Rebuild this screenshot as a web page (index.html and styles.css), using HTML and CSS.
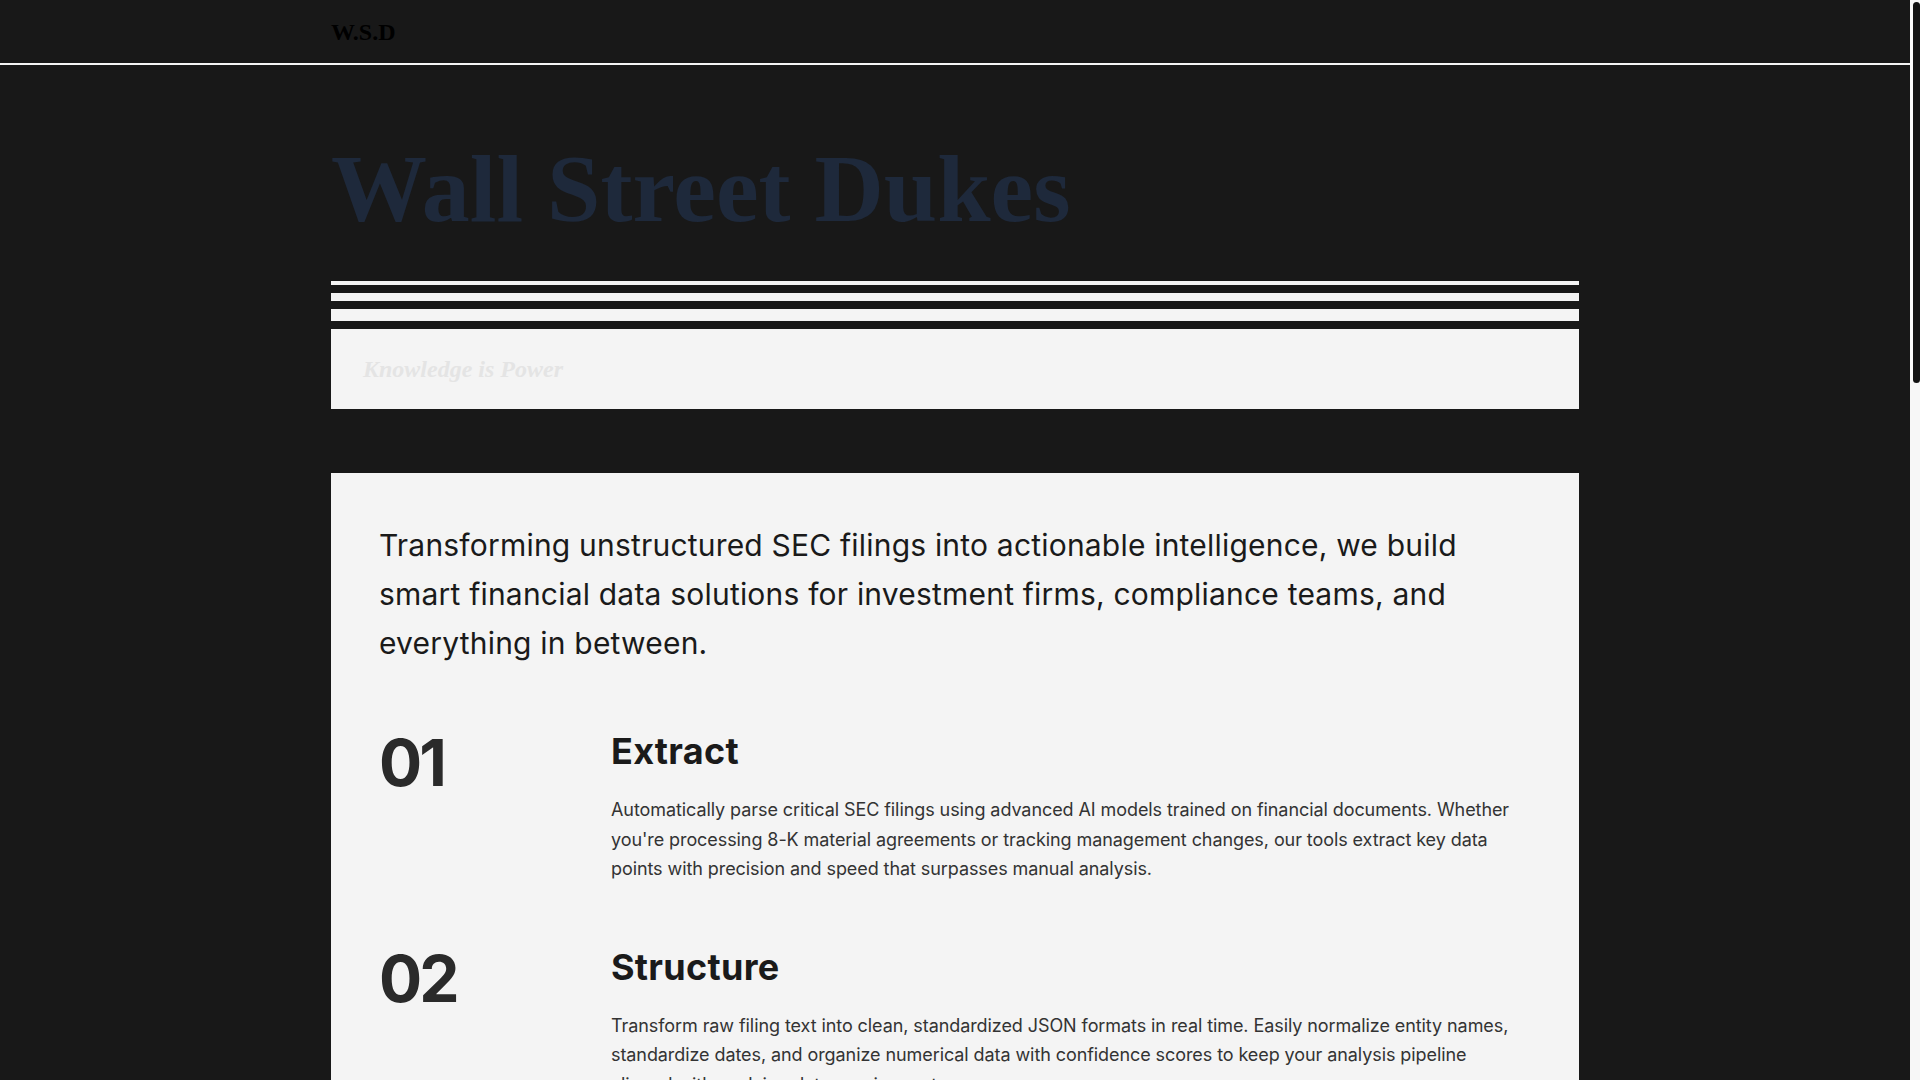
FILE: index.html
```html
<!DOCTYPE html>
<html lang="en">
<head>
<meta charset="utf-8">
<title>Wall Street Dukes</title>
<link rel="stylesheet" href="styles.css">
</head>
<body>
<div class="page">
  <header class="site-header">
    <div class="container header-inner">
      <span class="logo">W.S.D</span>
    </div>
  </header>

  <main>
    <section class="hero container">
      <h1 class="hero-title">Wall Street Dukes</h1>
      <div class="stripes">
        <div class="stripe stripe-sm"></div>
        <div class="stripe stripe-md"></div>
        <div class="stripe stripe-lg"></div>
      </div>
      <div class="tagline-box">
        <p class="tagline">Knowledge is Power</p>
      </div>
    </section>

    <section class="container">
      <div class="card">
        <p class="intro">Transforming unstructured SEC filings into actionable intelligence, we build smart financial data solutions for investment firms, compliance teams, and everything in between.</p>

        <div class="features">
          <div class="feature">
            <div class="feature-num">01</div>
            <div class="feature-body">
              <h2 class="feature-title">Extract</h2>
              <p class="feature-text">Automatically parse critical SEC filings using advanced AI models trained on financial documents. Whether you're processing 8-K material agreements or tracking management changes, our tools extract key data points with precision and speed that surpasses manual analysis.</p>
            </div>
          </div>
          <div class="feature">
            <div class="feature-num">02</div>
            <div class="feature-body">
              <h2 class="feature-title">Structure</h2>
              <p class="feature-text">Transform raw filing text into clean, standardized JSON formats in real time. Easily normalize entity names, standardize dates, and organize numerical data with confidence scores to keep your analysis pipeline aligned with evolving data requirements.</p>
            </div>
          </div>
          <div class="feature">
            <div class="feature-num">03</div>
            <div class="feature-body">
              <h2 class="feature-title">Analyze</h2>
              <p class="feature-text">Surface the signals that matter across thousands of filings. Compare disclosures over time, flag unusual language, and connect related events so your team can focus on decisions instead of document review.</p>
            </div>
          </div>
          <div class="feature">
            <div class="feature-num">04</div>
            <div class="feature-body">
              <h2 class="feature-title">Deliver</h2>
              <p class="feature-text">Push structured results straight into your existing tools through simple APIs and scheduled exports. From research dashboards to compliance workflows, your data arrives where you need it, when you need it.</p>
            </div>
          </div>
        </div>
      </div>
    </section>

    <section class="container audience">
      <h2 class="section-title">Who We Serve</h2>
      <div class="audience-grid">
        <div class="audience-card">
          <h3 class="audience-title">Investment Firms</h3>
          <p class="audience-text">Track material events, insider activity and management changes across your coverage universe without reading every filing.</p>
        </div>
        <div class="audience-card">
          <h3 class="audience-title">Compliance Teams</h3>
          <p class="audience-text">Monitor disclosures, catch missing information and keep a clean audit trail of every document you review.</p>
        </div>
        <div class="audience-card">
          <h3 class="audience-title">Research Analysts</h3>
          <p class="audience-text">Build datasets from years of filings in minutes and spend your time on insight rather than data entry.</p>
        </div>
      </div>
    </section>

    <section class="container contact">
      <div class="contact-box">
        <h2 class="contact-title">Ready to put your filings to work?</h2>
        <p class="contact-text">Talk to our team about a pilot tailored to your workflow.</p>
        <span class="contact-button">Get in touch</span>
      </div>
    </section>
  </main>

  <footer class="site-footer">
    <div class="container footer-inner">
      <span class="footer-logo">W.S.D</span>
      <span class="footer-copy">© 2025 Wall Street Dukes. All rights reserved.</span>
    </div>
  </footer>
</div>
<div class="scrollbar" aria-hidden="true"><div class="scrollbar-thumb"></div></div>
</body>
</html>
```

FILE: styles.css
```css
html, body {
  margin: 0;
  padding: 0;
}

body {
  display: flex;
  align-items: flex-start;
  background: #181818;
  font-family: "Inter", "Liberation Sans", sans-serif;
  color: #f4f4f4;
}

.page {
  flex: 1;
  min-width: 0;
}

.scrollbar {
  flex: 0 0 10px;
  position: sticky;
  top: 0;
  height: 100vh;
  background: #f7f7f7;
}

.scrollbar-thumb {
  margin: 2px 0 0 3px;
  height: 381px;
  background: #111111;
  border-radius: 4px;
}

.container {
  max-width: 1248px;
  margin: 0 auto;
  padding: 0 16px;
}

.site-header {
  height: 63px;
  border-bottom: 2px solid #f4f4f4;
}

.header-inner {
  height: 100%;
  display: flex;
  align-items: center;
}

.logo {
  font-family: "Liberation Serif", "Times New Roman", serif;
  font-weight: 700;
  font-size: 24px;
  line-height: 1;
  color: #000;
}

.hero {
  padding-top: 76px;
}

.hero-title {
  margin: 0 0 44px;
  font-family: "Liberation Serif", "Times New Roman", serif;
  font-weight: 700;
  font-size: 96px;
  line-height: 1;
  color: #1e293b;
}

.stripes {
  display: flex;
  flex-direction: column;
  gap: 8px;
  margin-bottom: 8px;
}

.stripe {
  background: #f4f4f4;
}

.stripe-sm { height: 4px; }
.stripe-md { height: 8px; }
.stripe-lg { height: 12px; }

.tagline-box {
  background: #f4f4f4;
  padding: 24px 32px;
}

.tagline {
  margin: 0;
  font-family: "Liberation Serif", "Times New Roman", serif;
  font-style: italic;
  font-weight: 700;
  font-size: 24px;
  line-height: 32px;
  color: #e4e4e4;
}

.card {
  margin-top: 64px;
  background: #f4f4f4;
  padding: 48px;
  color: #1a1a1a;
}

.intro {
  margin: 0 0 64px;
  font-size: 30px;
  line-height: 1.625;
  font-weight: 400;
  letter-spacing: 0.2px;
  color: #1a1a1a;
}

.features {
  display: flex;
  flex-direction: column;
  gap: 64px;
}

.feature {
  display: grid;
  grid-template-columns: 200px 1fr;
  column-gap: 32px;
}

.feature-num {
  font-size: 64px;
  line-height: 1;
  font-weight: 700;
  letter-spacing: -3px;
  color: #2a2a2a;
}

.feature-title {
  margin: 0 0 24px;
  font-size: 36px;
  line-height: 40px;
  font-weight: 700;
  letter-spacing: 0.3px;
  color: #1a1a1a;
}

.feature-text {
  margin: 0;
  font-size: 18px;
  line-height: 1.625;
  letter-spacing: -0.08px;
  color: #333333;
}

.audience {
  padding-top: 96px;
}

.section-title {
  margin: 0 0 40px;
  font-family: "Liberation Serif", "Times New Roman", serif;
  font-size: 56px;
  font-weight: 700;
  line-height: 1.1;
  color: #f4f4f4;
}

.audience-grid {
  display: grid;
  grid-template-columns: repeat(3, 1fr);
  gap: 32px;
}

.audience-card {
  border: 2px solid #f4f4f4;
  padding: 40px 32px;
  min-height: 260px;
}

.audience-title {
  margin: 0 0 20px;
  font-size: 28px;
  line-height: 36px;
  font-weight: 700;
  color: #f4f4f4;
}

.audience-text {
  margin: 0;
  font-size: 18px;
  line-height: 1.625;
  color: #cfcfcf;
}

.contact {
  padding-top: 96px;
  padding-bottom: 120px;
}

.contact-box {
  background: #f4f4f4;
  padding: 80px 48px;
  display: flex;
  flex-direction: column;
  align-items: flex-start;
  gap: 24px;
  min-height: 280px;
}

.contact-title {
  margin: 0;
  font-family: "Liberation Serif", "Times New Roman", serif;
  font-size: 56px;
  line-height: 1.1;
  font-weight: 700;
  color: #1e293b;
}

.contact-text {
  margin: 0;
  font-size: 20px;
  line-height: 1.6;
  color: #333;
}

.contact-button {
  display: inline-block;
  background: #181818;
  color: #f4f4f4;
  padding: 16px 32px;
  font-size: 18px;
  font-weight: 600;
}

.site-footer {
  border-top: 2px solid #f4f4f4;
}

.footer-inner {
  height: 120px;
  display: flex;
  align-items: center;
  justify-content: space-between;
}

.footer-logo {
  font-family: "Liberation Serif", "Times New Roman", serif;
  font-weight: 700;
  font-size: 24px;
  color: #f4f4f4;
}

.footer-copy {
  font-size: 16px;
  color: #bdbdbd;
}
```
